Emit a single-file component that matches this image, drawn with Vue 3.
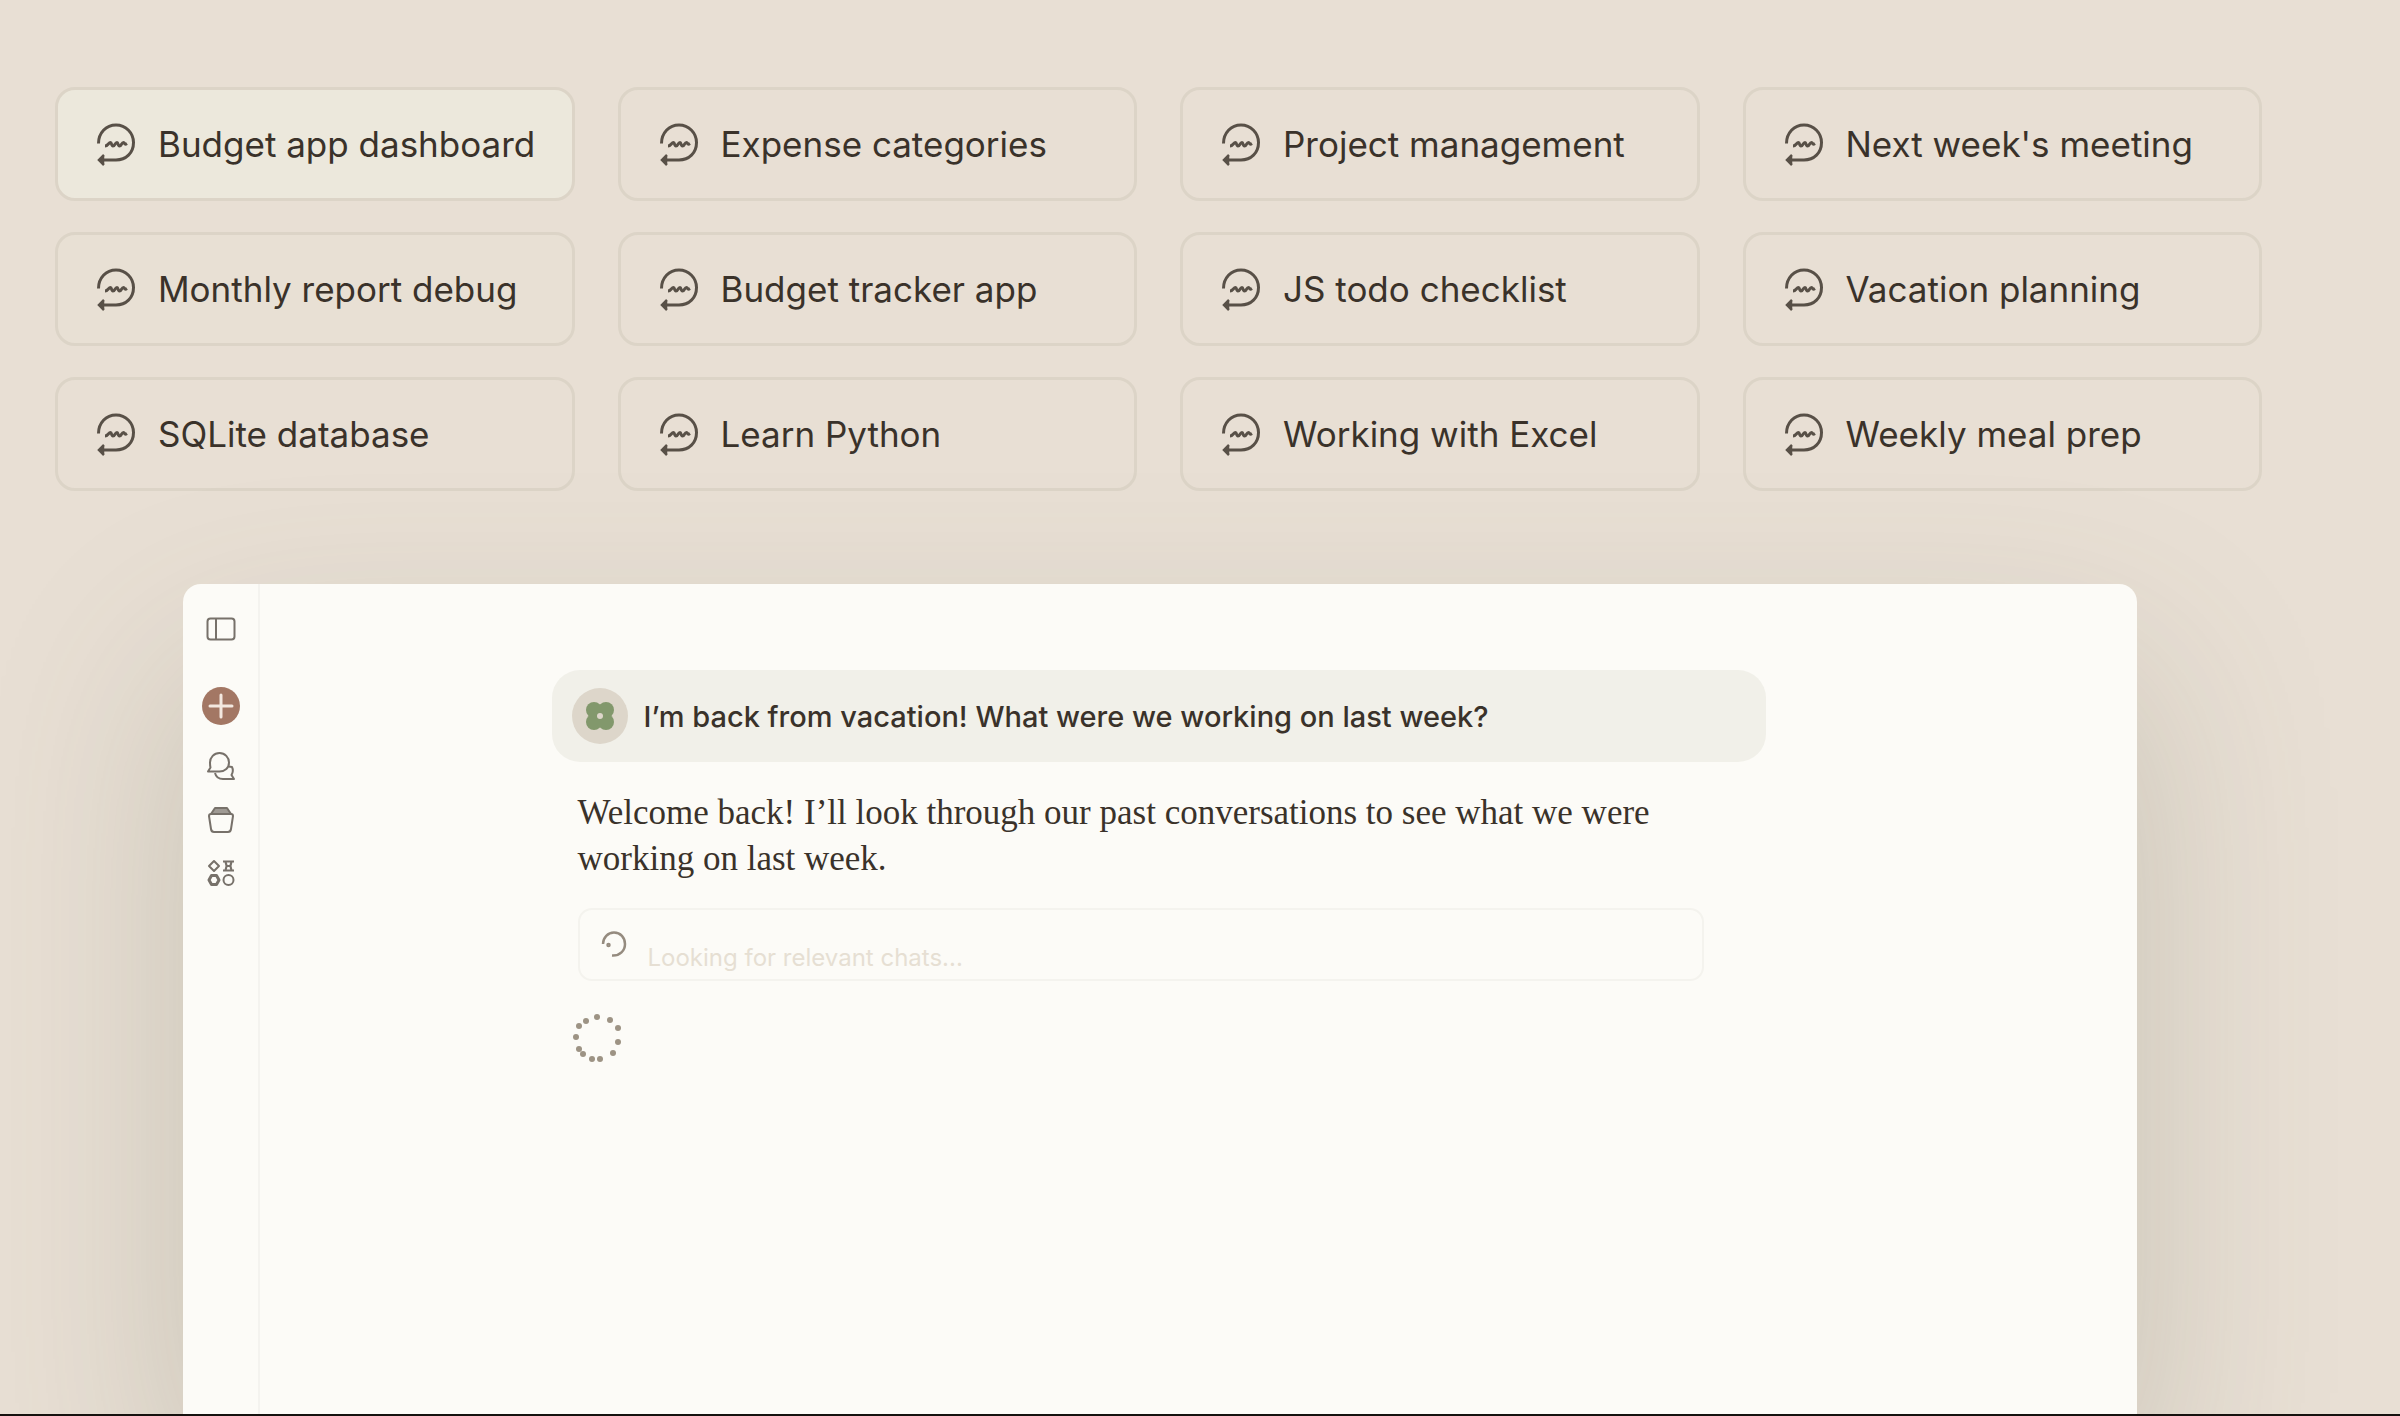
<script setup>
const chats = [
  'Budget app dashboard', 'Expense categories', 'Project management', "Next week's meeting",
  'Monthly report debug', 'Budget tracker app', 'JS todo checklist', 'Vacation planning',
  'SQLite database', 'Learn Python', 'Working with Excel', 'Weekly meal prep',
]
const dots = [
  [25, 4], [38, 7], [46, 15], [46, 29], [41, 40], [28, 46],
  [20, 46], [11, 41], [7, 36], [4, 24], [7, 13], [14, 8],
]
</script>

<template>
  <div class="page">
    <nav class="chats" aria-label="Past chats">
      <button v-for="(chat, i) in chats" :key="chat" type="button" class="chat" :class="{ lit: i === 0, warm: i === 4 }">
        <svg class="chat-icon" viewBox="0 0 40 44" fill="none" stroke="currentColor" stroke-width="3" aria-hidden="true">
          <path d="M2.5 21.5C2.5 11 10 3 20 3C30 3 37.500 11 37.500 20.500C37.500 31 30 38 20 38H4" />
          <path d="M8 33L3 38L8 43M7 35V41" stroke-width="2.500" />
          <path d="M9 24C12 24 12.500 20.500 14.500 20.500C16 20.500 15 24 17 24C19 24 19 20.500 21 20.500C22.500 20.500 21.500 24 23.500 24C25.500 24 25.500 20.500 27.500 20.500C29 20.500 28 23.500 31 21.500" />
        </svg>
        <span>{{ chat }}</span>
      </button>
    </nav>

    <section class="window">
      <aside class="rail">
        <button type="button" class="tool panel" aria-label="Toggle sidebar">
          <svg width="30" height="24" viewBox="0 0 30 24" fill="none" stroke="currentColor" stroke-width="2">
            <rect x="1.500" y="1.500" width="27" height="21" rx="3" /><path d="M10 2V22" />
          </svg>
        </button>
        <button type="button" class="tool add" aria-label="New chat">
          <svg width="38" height="38" viewBox="0 0 38 38" fill="none" stroke="#f3e8df" stroke-width="3" stroke-linecap="round">
            <path d="M19 8V30M8 19H30" />
          </svg>
        </button>
        <button type="button" class="tool" aria-label="Chats">
          <svg width="30" height="30" viewBox="0 0 30 30" fill="none" stroke="currentColor" stroke-width="2" stroke-linejoin="round">
            <path d="M13.500 2C19 2 23 6.500 23 11.500C23 17 19 20.500 13.500 20.500H2L4.500 16.500C4 15 4 13.500 4 11.500C4 6.500 8 2 13.500 2Z" />
            <path d="M9 22C10 26 13 28 17 28H28L25.500 24C27.500 20.500 27 18 26 16L22.500 15.500" />
          </svg>
        </button>
        <button type="button" class="tool" aria-label="Projects">
          <svg width="30" height="30" viewBox="0 0 30 30" fill="none" stroke="currentColor" stroke-width="2" stroke-linejoin="round">
            <path d="M5 9H25C26.500 9 27 10 27 11L25 24C24.700 26 24 27 22 27H8C6 27 5.300 26 5 24L3 11C3 10 3.500 9 5 9Z" />
            <path d="M5 9L9 3H21L25 9Z" fill="currentColor" fill-opacity="0.7" />
          </svg>
        </button>
        <button type="button" class="tool" aria-label="Artifacts">
          <svg width="30" height="30" viewBox="0 0 30 30" fill="none" stroke="currentColor" stroke-width="2" stroke-linejoin="round">
            <path d="M8 2L13 7L8 12L3 7Z" />
            <path d="M17 2.500H28M17 11.500H28M19.500 3C21 6 21 8 19.500 11M25.500 3C24 6 24 8 25.500 11M20 7H25" />
            <path d="M5.500 16.500H10.500L13 21L10.500 25.500H5.500L3 21Z" stroke-width="3" />
            <circle cx="22.500" cy="21" r="5" />
          </svg>
        </button>
      </aside>

      <main class="stage">
        <div class="thread">
          <div class="bubble">
            <svg class="avatar" viewBox="0 0 56 56" aria-hidden="true">
              <circle cx="28" cy="28" r="28" fill="#ddd6ca" />
              <g fill="#82986c">
                <circle cx="22" cy="22" r="8" /><circle cx="34" cy="22" r="8" />
                <circle cx="22" cy="34" r="8" /><circle cx="34" cy="34" r="8" />
                <rect x="17" y="23" width="22" height="10" /><rect x="23" y="17" width="10" height="22" />
              </g>
              <circle cx="28" cy="28" r="3" fill="#ddd6ca" />
            </svg>
            <p>I’m back from vacation! What were we working on last week?</p>
          </div>
          <div class="reply">
            <p class="answer">Welcome back! I’ll look through our past conversations to see what we were working on last week.</p>
            <div class="status" role="status">
              <svg class="spinner" viewBox="0 0 28 28" fill="none" stroke="currentColor" stroke-width="2.500" aria-hidden="true">
                <path d="M3 14C3 7.500 8 2.500 14 2.500C20.500 2.500 25 7.500 25 14C25 20.500 20 26 12 25.500" />
                <circle cx="8.500" cy="15" r="1" />
              </svg>
              <span>Looking for relevant chats...</span>
            </div>
          </div>
          <svg class="ring" viewBox="0 0 50 50" fill="#9d9384" aria-hidden="true">
            <circle v-for="(d, i) in dots" :key="i" :cx="d[0]" :cy="d[1]" r="3" />
          </svg>
        </div>
      </main>
    </section>
  </div>
</template>

<style>
body { margin: 0; }
</style>

<style scoped>
* { box-sizing: border-box; }
p { margin: 0; }
button { font: inherit; color: inherit; padding: 0; border: 0; background: none; }
svg { display: block; flex: none; }

.page {
  display: flex;
  flex-direction: column;
  min-height: 100vh;
  overflow: hidden;
  background: #e8dfd4;
  border-bottom: 2px solid #15110e;
  font-family: Inter, "Liberation Sans", sans-serif;
  color: #3a322a;
}
.chats {
  display: grid;
  grid-template-columns: repeat(4, minmax(0, 1fr));
  gap: 31px 43px;
  padding: 87px 138px 0 55px;
}
.chat {
  display: flex;
  align-items: center;
  gap: 22px;
  height: 114px;
  padding: 0 38px;
  border: 3px solid #dcd4c7;
  border-radius: 20px;
  font-size: 35px;
  text-align: left;
  white-space: nowrap;
}
.chat.lit { background: #ece8dc; }
.chat.warm { background: #e8e0d4; }
.chat-icon { width: 40px; height: 44px; color: #585047; }

.window {
  display: flex;
  flex: 1;
  margin: 93px 263px 0 183px;
  border-radius: 18px 18px 0 0;
  background: #fcfbf7;
  box-shadow: 0 90px 200px rgb(85 95 75 / 22%);
}
.rail {
  display: flex;
  flex-direction: column;
  align-items: center;
  gap: 24px;
  width: 77px;
  padding-top: 33px;
  border-right: 2px solid #f4f3ef;
  color: #77716a;
}
.panel { margin-bottom: 22px; }
.add { margin-bottom: 2px; border-radius: 50%; background: #a37764; }

.stage {
  display: flex;
  flex: 1;
  justify-content: center;
  padding: 86px 80px 0 0;
}
.thread { width: 1214px; }
.bubble {
  display: flex;
  align-items: center;
  gap: 16px;
  height: 92px;
  padding: 0 20px;
  border-radius: 28px;
  background: #f1f0e9;
  font-size: 29px;
  font-weight: 500;
}
.avatar { width: 56px; height: 56px; }
.reply { padding: 28px 62px 0 26px; }
.answer {
  font-family: "Liberation Serif", serif;
  font-size: 35px;
  line-height: 46px;
}
.status {
  display: flex;
  gap: 20px;
  height: 73px;
  margin-top: 26px;
  padding: 20px 20px;
  border: 2px solid #f4f3ee;
  border-radius: 14px;
  font-size: 24px;
  line-height: 56px;
  color: #e6dfd3;
}
.spinner { width: 28px; height: 28px; color: #958b7f; }
.ring { width: 50px; height: 50px; margin: 32px 0 0 20px; }
</style>
